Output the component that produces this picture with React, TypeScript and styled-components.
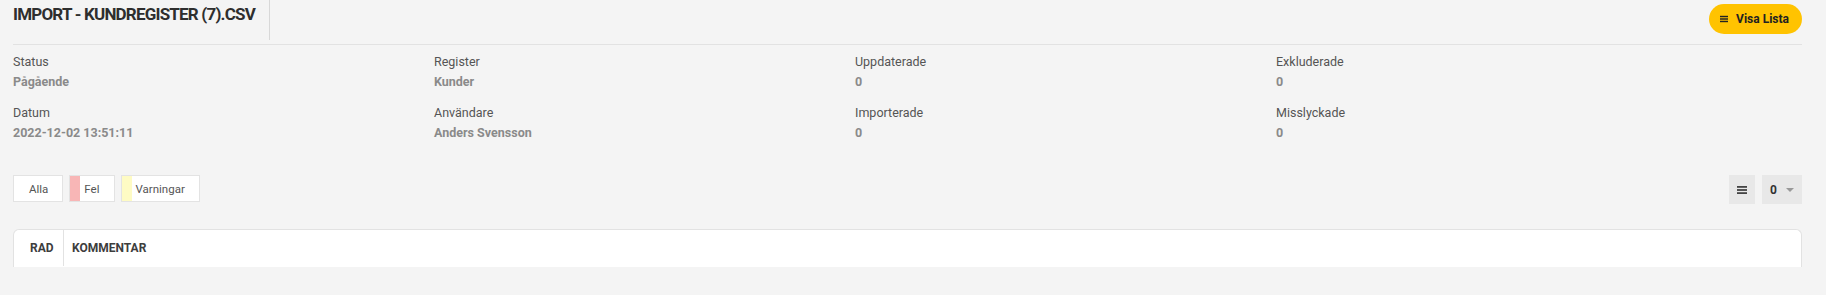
import styled, { createGlobalStyle } from 'styled-components';

const GlobalStyle = createGlobalStyle`
	html, body {
		margin: 0;
		padding: 0;
		background: #f4f4f4;
		font-family: Roboto, 'Liberation Sans', sans-serif;
		color: #555;
	}
`;

type Field = { label: string; value: string };

const fields: Field[] = [
	{ label: 'Status', value: 'Pågående' },
	{ label: 'Register', value: 'Kunder' },
	{ label: 'Uppdaterade', value: '0' },
	{ label: 'Exkluderade', value: '0' },
	{ label: 'Datum', value: '2022-12-02 13:51:11' },
	{ label: 'Användare', value: 'Anders Svensson' },
	{ label: 'Importerade', value: '0' },
	{ label: 'Misslyckade', value: '0' },
];

const filters = [
	{ label: 'Alla' },
	{ label: 'Fel', marker: '#f8b6b6' },
	{ label: 'Varningar', marker: '#fefbc4' },
];

const Page = styled.div`
	padding: 0 24px 0 13px;
	height: 295px;
	box-sizing: border-box;
	overflow: hidden;
`;

const Header = styled.header`
	display: flex;
	align-items: flex-start;
	justify-content: space-between;
	height: 44px;
	border-bottom: 1px solid #e2e2e2;
`;

const TitleBox = styled.div`
	height: 40px;
	padding-right: 14px;
	border-right: 1px solid #d8d8d8;
`;

const Title = styled.h1`
	margin: 0;
	font-size: 17px;
	line-height: 28px;
	font-weight: 700;
	letter-spacing: -0.8px;
	color: #2e2e2e;
`;

const PillButton = styled.button`
	display: flex;
	align-items: center;
	gap: 8px;
	margin-top: 4px;
	height: 30px;
	padding: 0 13px 0 11px;
	border: none;
	border-radius: 15px;
	background: #ffc300;
	color: #222;
	font-family: Roboto, 'Liberation Sans', sans-serif;
	font-size: 12px;
	font-weight: 700;
	cursor: pointer;
`;

const InfoGrid = styled.section`
	display: grid;
	grid-template-columns: repeat(4, 421px);
	row-gap: 11px;
	margin-top: 7px;
`;

const Cell = styled.div`
	display: flex;
	flex-direction: column;
`;

const Label = styled.span`
	font-size: 12.5px;
	line-height: 20px;
	color: #555;
`;

const Value = styled.span`
	font-size: 12.5px;
	line-height: 20px;
	font-weight: 700;
	color: #8a8a8a;
`;

const Toolbar = styled.div`
	display: flex;
	justify-content: space-between;
	align-items: flex-start;
	margin-top: 32px;
`;

const FilterGroup = styled.div`
	display: flex;
	gap: 6px;
`;

const FilterButton = styled.button<{ $marker?: string }>`
	height: 27px;
	padding: 0 14px 0 ${(p) => (p.$marker ? '14px' : '15px')};
	border: 1px solid #e3e3e3;
	background: #fff;
	box-shadow: ${(p) => (p.$marker ? `inset 10px 0 0 ${p.$marker}` : 'none')};
	font-family: Roboto, 'Liberation Sans', sans-serif;
	font-size: 11.5px;
	color: #555;
	cursor: pointer;
`;

const ControlGroup = styled.div`
	display: flex;
	gap: 7px;
`;

const IconButton = styled.button`
	display: flex;
	align-items: center;
	justify-content: center;
	width: 26px;
	height: 29px;
	padding: 0;
	border: none;
	background: #e8e8e8;
	cursor: pointer;
`;

const Dropdown = styled.button`
	display: flex;
	align-items: center;
	gap: 9px;
	width: 40px;
	height: 29px;
	padding: 0 0 0 8px;
	border: none;
	background: #e8e8e8;
	font-family: Roboto, 'Liberation Sans', sans-serif;
	font-size: 12px;
	font-weight: 700;
	color: #333;
	cursor: pointer;
`;

const Caret = styled.span`
	width: 0;
	height: 0;
	border-left: 4.5px solid transparent;
	border-right: 4.5px solid transparent;
	border-top: 4px solid #999;
`;

const Table = styled.div`
	display: flex;
	margin-top: 25px;
	height: 37px;
	background: #fff;
	border: 1px solid #e2e2e2;
	border-bottom: none;
	border-radius: 6px 6px 0 0;
`;

const HeadCell = styled.div<{ $width?: string }>`
	display: flex;
	align-items: center;
	height: 36px;
	padding: 0 10px 0 ${(p) => (p.$width ? '16px' : '8px')};
	width: ${(p) => p.$width ?? 'auto'};
	box-sizing: border-box;
	border-right: ${(p) => (p.$width ? '1px solid #e2e2e2' : 'none')};
	font-size: 12px;
	font-weight: 700;
	color: #3d3d3d;
`;

function Bars({ size, color }: { size: number; color: string }) {
	return (
		<svg width={size} height={size} viewBox="0 0 10 10">
			<rect x="0" y="1" width="10" height="1.8" fill={color} />
			<rect x="0" y="4.1" width="10" height="1.8" fill={color} />
			<rect x="0" y="7.2" width="10" height="1.8" fill={color} />
		</svg>
	);
}

export default function App() {
	return (
		<>
			<GlobalStyle />
			<Page>
				<Header>
					<TitleBox>
						<Title>IMPORT - KUNDREGISTER (7).CSV</Title>
					</TitleBox>
					<PillButton>
						<Bars size={8} color="#222" />
						Visa Lista
					</PillButton>
				</Header>

				<InfoGrid>
					{fields.map((f) => (
						<Cell key={f.label}>
							<Label>{f.label}</Label>
							<Value>{f.value}</Value>
						</Cell>
					))}
				</InfoGrid>

				<Toolbar>
					<FilterGroup>
						{filters.map((f) => (
							<FilterButton key={f.label} $marker={f.marker}>
								{f.label}
							</FilterButton>
						))}
					</FilterGroup>
					<ControlGroup>
						<IconButton>
							<Bars size={10} color="#444" />
						</IconButton>
						<Dropdown>
							0
							<Caret />
						</Dropdown>
					</ControlGroup>
				</Toolbar>

				<Table>
					<HeadCell $width="50px">RAD</HeadCell>
					<HeadCell>KOMMENTAR</HeadCell>
				</Table>
			</Page>
		</>
	);
}
